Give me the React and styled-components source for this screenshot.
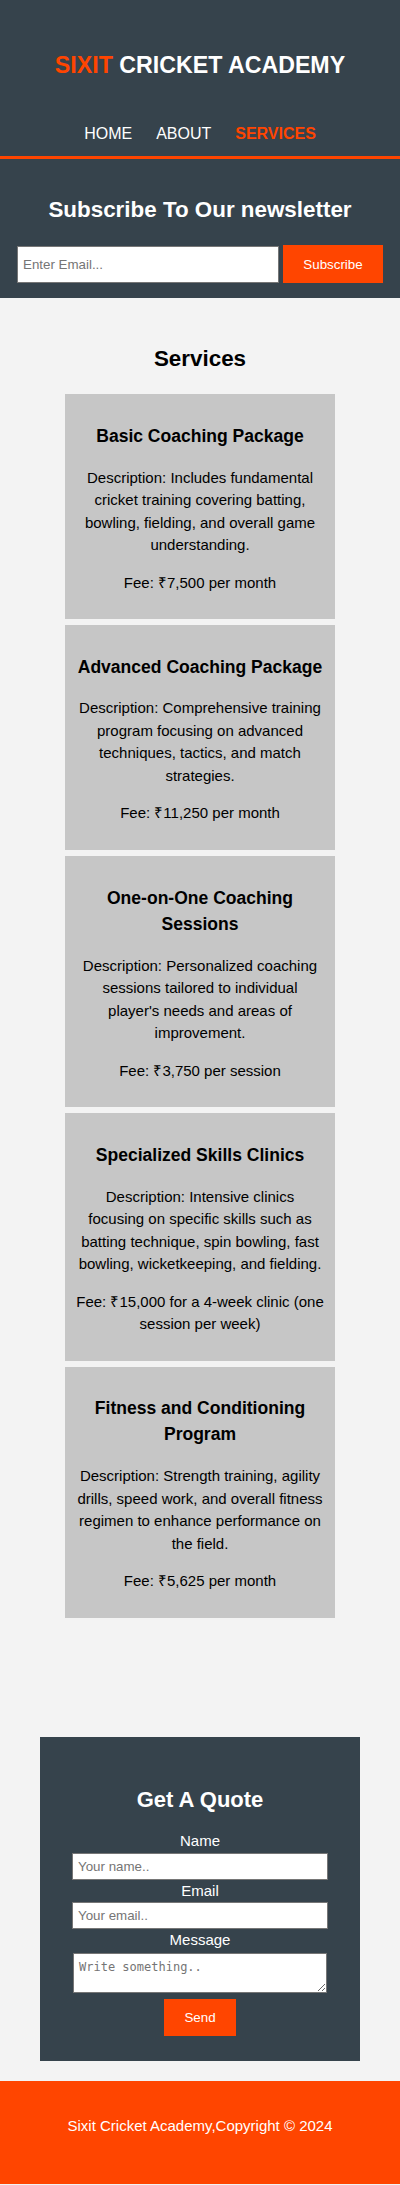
import styled, { createGlobalStyle } from "styled-components"

const services = [
    {
        title: "Basic Coaching Package",
        description: "Description: Includes fundamental cricket training covering batting, bowling, fielding, and overall game understanding.",
        fee: "Fee: ₹7,500 per month",
    },
    {
        title: "Advanced Coaching Package",
        description: "Description: Comprehensive training program focusing on advanced techniques, tactics, and match strategies.",
        fee: "Fee: ₹11,250 per month",
    },
    {
        title: "One-on-One Coaching Sessions",
        description: "Description: Personalized coaching sessions tailored to individual player's needs and areas of improvement.",
        fee: "Fee: ₹3,750 per session",
    },
    {
        title: "Specialized Skills Clinics",
        description: "Description: Intensive clinics focusing on specific skills such as batting technique, spin bowling, fast bowling, wicketkeeping, and fielding.",
        fee: "Fee: ₹15,000 for a 4-week clinic (one session per week)",
    },
    {
        title: "Fitness and Conditioning Program",
        description: "Description: Strength training, agility drills, speed work, and overall fitness regimen to enhance performance on the field.",
        fee: "Fee: ₹5,625 per month",
    },
];

export default function App() {
    return (
        <>
            <GlobalStyle />
            <Header>
                <Brand><span>SIXIT</span> CRICKET ACADEMY</Brand>
                <Nav>
                    <NavLink href="#">HOME</NavLink>
                    <NavLink href="#">ABOUT</NavLink>
                    <NavLink href="#" $active>SERVICES</NavLink>
                </Nav>
                <Newsletter>
                    <h2>Subscribe To Our newsletter</h2>
                    <SubscribeForm onSubmit={(e) => e.preventDefault()}>
                        <EmailInput type="email" placeholder="Enter Email..." />
                        <OrangeButton type="submit" $width="100px" $height="38px">Subscribe</OrangeButton>
                    </SubscribeForm>
                </Newsletter>
            </Header>

            <ServicesSection>
                <h2>Services</h2>
                <CardList>
                    {services.map((service) => (
                        <Card key={service.title}>
                            <h3>{service.title}</h3>
                            <Description>{service.description}</Description>
                            <Fee>{service.fee}</Fee>
                        </Card>
                    ))}
                </CardList>
            </ServicesSection>

            <QuoteBox>
                <h2>Get A Quote</h2>
                <form onSubmit={(e) => e.preventDefault()}>
                    <Label htmlFor="name">Name</Label>
                    <QuoteInput id="name" type="text" placeholder="Your name.." />
                    <Label htmlFor="email">Email</Label>
                    <QuoteInput id="email" type="email" placeholder="Your email.." />
                    <Label htmlFor="message">Message</Label>
                    <MessageArea id="message" placeholder="Write something.." />
                    <OrangeButton type="submit" $width="72px" $height="37px">Send</OrangeButton>
                </form>
            </QuoteBox>

            <Footer>
                <p>Sixit Cricket Academy,Copyright © 2024</p>
            </Footer>
        </>
    )
}

const GlobalStyle = createGlobalStyle`
    body {
        margin: 0;
        background: #f3f3f3;
        font-family: "Liberation Sans", Arial, sans-serif;
        font-size: 15px;
        line-height: 1.5;
        color: #000;
    }
`
const Header = styled.header`
    background: #36434c;
    color: #fff;
    text-align: center;
`
const Brand = styled.h1`
    margin: 0;
    padding-top: 48px;
    font-size: 23.2px;
    line-height: 34.8px;
    font-weight: 700;
    span {
        color: #ff4500;
    }
`
const Nav = styled.nav`
    display: flex;
    justify-content: center;
    gap: 24px;
    margin-top: 39px;
    padding-bottom: 10.5px;
    border-bottom: 3px solid #ff4500;
`
const NavLink = styled.a`
    font-size: 16px;
    line-height: 24px;
    text-decoration: none;
    color: ${(props) => (props.$active ? "#ff4500" : "#fff")};
    font-weight: ${(props) => (props.$active ? 700 : 400)};
`
const Newsletter = styled.section`
    padding: 33.4px 0 14.7px;
    h2 {
        margin: 0;
        font-size: 22.4px;
        line-height: 33.6px;
    }
`
const SubscribeForm = styled.form`
    display: flex;
    justify-content: center;
    align-items: center;
    gap: 4px;
    margin-top: 19px;
`
const EmailInput = styled.input`
    box-sizing: border-box;
    width: 262px;
    height: 37px;
    padding: 0 5px;
    border: 1px solid #767676;
    font-family: "Liberation Sans", Arial, sans-serif;
    font-size: 13.33px;
    &::placeholder {
        color: #757575;
    }
`
const OrangeButton = styled.button`
    box-sizing: border-box;
    width: ${(props) => props.$width};
    height: ${(props) => props.$height};
    padding: 0;
    border: none;
    background: #ff4500;
    color: #fff;
    font-family: "Liberation Sans", Arial, sans-serif;
    font-size: 13.33px;
    cursor: pointer;
`
const ServicesSection = styled.section`
    padding-top: 44px;
    h2 {
        margin: 0 0 18.6px;
        text-align: center;
        font-size: 22.4px;
        line-height: 33.6px;
    }
`
const CardList = styled.div`
    display: flex;
    flex-direction: column;
    align-items: center;
    gap: 6px;
`
const Card = styled.article`
    box-sizing: border-box;
    width: 270px;
    padding: 11px 9px 10px;
    background: #c6c6c6;
    text-align: center;
    h3 {
        margin: 17.55px 0;
        font-size: 17.55px;
    }
`
const Description = styled.p`
    margin: 15px 0;
    padding: 0 2.5px;
`
const Fee = styled.p`
    margin: 15px 0;
`
const QuoteBox = styled.section`
    box-sizing: border-box;
    width: 320px;
    margin: 119px auto 20px;
    padding: 46px 0 24.3px;
    background: #36434c;
    color: #fff;
    text-align: center;
    h2 {
        margin: 0 0 14.5px;
        font-size: 22px;
        line-height: 33px;
    }
`
const Label = styled.label`
    display: block;
    line-height: 22.5px;
`
const QuoteInput = styled.input`
    display: block;
    box-sizing: border-box;
    width: 256px;
    height: 27px;
    margin: 0 auto;
    padding: 0 5px;
    border: 1px solid #767676;
    font-family: "Liberation Sans", Arial, sans-serif;
    font-size: 13.33px;
    &::placeholder {
        color: #757575;
    }
`
const MessageArea = styled.textarea`
    display: block;
    box-sizing: border-box;
    width: 254px;
    height: 40px;
    margin: 1px auto 6.4px;
    padding: 6px 5px;
    border: 1px solid #767676;
    font-family: "DejaVu Sans Mono", "Liberation Mono", monospace;
    font-size: 12px;
    line-height: 14px;
    resize: vertical;
    &::placeholder {
        color: #757575;
    }
`
const Footer = styled.footer`
    background: #ff4500;
    color: #fff;
    text-align: center;
    padding: 34px 0 46.5px;
    p {
        margin: 0;
        line-height: 22.5px;
    }
`
